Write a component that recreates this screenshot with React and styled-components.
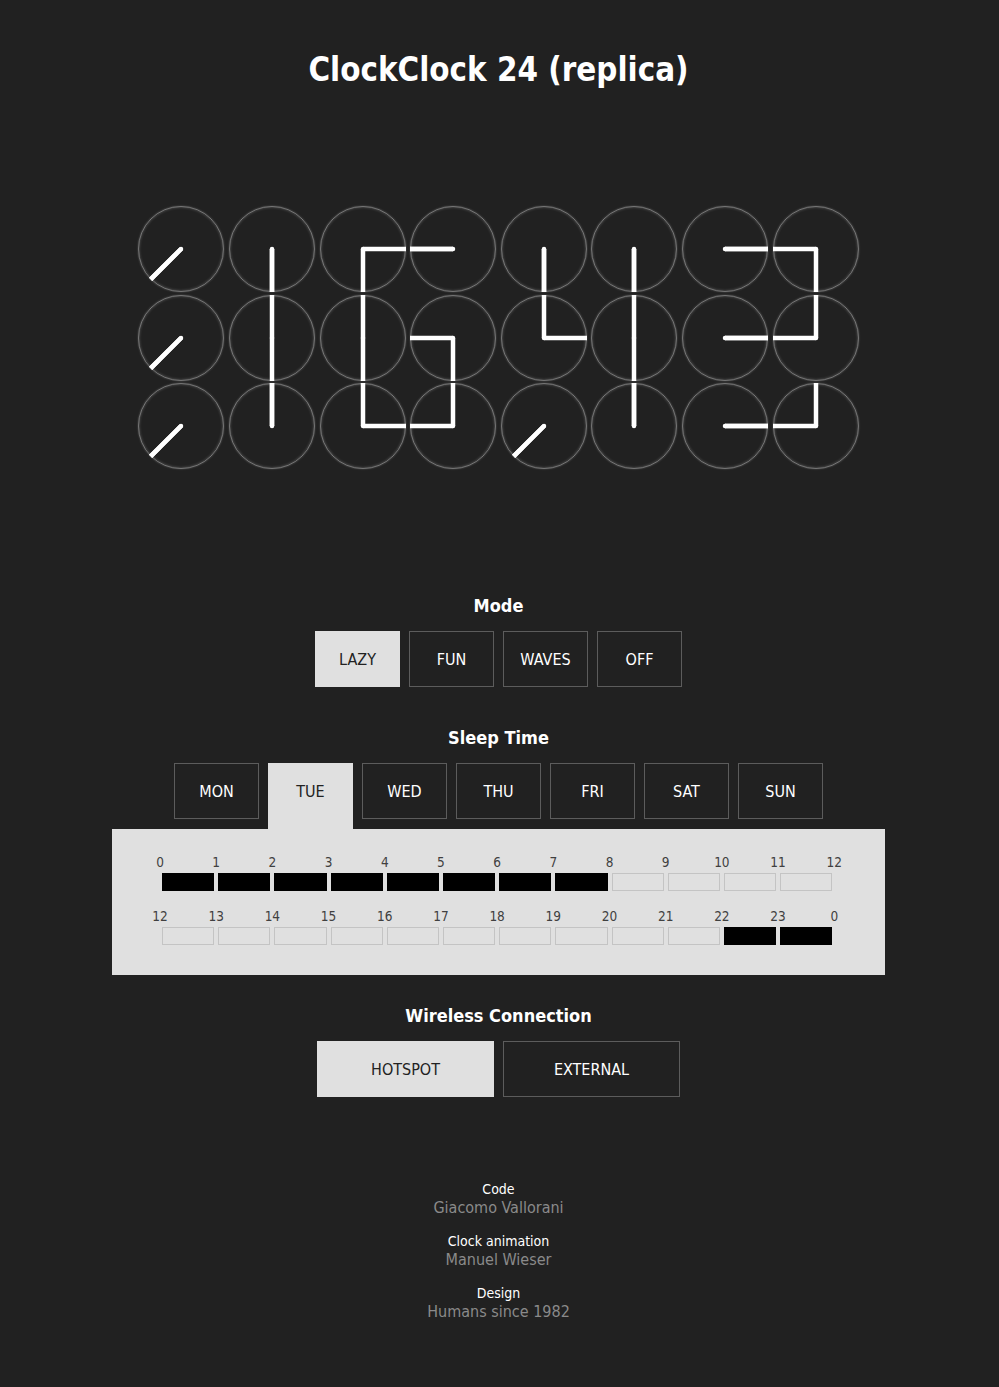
import React, { useState } from "react";
import styled, { createGlobalStyle } from "styled-components";

const GlobalStyle = createGlobalStyle`
  body {
    margin: 0;
    background: #212121;
    color: #fff;
    font-family: "DejaVu Sans Condensed", "DejaVu Sans", "Liberation Sans", sans-serif;
  }
`;

// angles in degrees, clockwise from 12 o'clock
const TIME = [
  [[225, 225], [180, 180], [90, 180], [270, 270], [180, 180], [180, 180], [90, 90], [270, 180]],
  [[225, 225], [0, 180], [0, 180], [270, 180], [0, 90], [0, 180], [90, 90], [0, 270]],
  [[225, 225], [0, 0], [0, 90], [0, 270], [225, 225], [0, 0], [90, 90], [0, 270]],
];

const MODES = ["LAZY", "FUN", "WAVES", "OFF"];
const DAYS = ["MON", "TUE", "WED", "THU", "FRI", "SAT", "SUN"];
const SLEEP = [0, 1, 2, 3, 4, 5, 6, 7, 22, 23];

const Clock = ({ hands }) => (
  <Face>
    <svg viewBox="-42 -42 84 84" width="84" height="84">
      {hands.map((a, i) => (
        <g key={i} transform={`rotate(${a})`}>
          <line x1="0" y1="0" x2="0" y2="-43" stroke="#fff" strokeWidth="4.5" />
        </g>
      ))}
      <circle cx="0" cy="0" r="2.25" fill="#fff" />
    </svg>
  </Face>
);

const HourRow = ({ from }) => {
  const labels = Array.from({ length: 13 }, (_, i) => (from + i) % 24);
  const hours = Array.from({ length: 12 }, (_, i) => from + i);
  return (
    <HourBlock>
      <Labels>
        {labels.map((l, i) => (
          <Label key={i}>{l}</Label>
        ))}
      </Labels>
      <Bars>
        {hours.map((h) => (
          <Cell key={h}>
            <Bar $on={SLEEP.includes(h)} />
          </Cell>
        ))}
      </Bars>
    </HourBlock>
  );
};

const App = () => {
  const [mode, setMode] = useState("LAZY");
  const [day, setDay] = useState("TUE");
  const [net, setNet] = useState("HOTSPOT");

  return (
    <Page>
      <GlobalStyle />
      <Title>ClockClock 24 (replica)</Title>

      <ClockGrid>
        {TIME.map((row, r) => row.map((hands, c) => <Clock key={`${r}-${c}`} hands={hands} />))}
      </ClockGrid>

      <Heading $top={125}>Mode</Heading>
      <Row>
        {MODES.map((m) => (
          <Button key={m} $active={mode === m} onClick={() => setMode(m)}>
            {m}
          </Button>
        ))}
      </Row>

      <Heading $top={39}>Sleep Time</Heading>
      <Tabs>
        {DAYS.map((d) => (
          <Tab key={d} $active={day === d} onClick={() => setDay(d)}>
            {d}
          </Tab>
        ))}
      </Tabs>
      <Panel>
        <HourRow from={0} />
        <HourRow from={12} />
      </Panel>

      <Heading $top={29}>Wireless Connection</Heading>
      <Row>
        {["HOTSPOT", "EXTERNAL"].map((n) => (
          <Button key={n} $wide $active={net === n} onClick={() => setNet(n)}>
            {n}
          </Button>
        ))}
      </Row>

      <Credits>
        <Credit>
          <Role>Code</Role>
          <Name>Giacomo Vallorani</Name>
        </Credit>
        <Credit>
          <Role>Clock animation</Role>
          <Name>Manuel Wieser</Name>
        </Credit>
        <Credit>
          <Role>Design</Role>
          <Name>Humans since 1982</Name>
        </Credit>
      </Credits>
    </Page>
  );
};

export default App;

const Page = styled.main`
  display: flex;
  flex-direction: column;
  align-items: center;
  padding: 50px 2px 60px 0;
`;

const Title = styled.h1`
  margin: 0;
  font-size: 32.8px;
  line-height: 40px;
  font-weight: bold;
`;

const ClockGrid = styled.div`
  margin-top: 116px;
  display: grid;
  grid-template-columns: repeat(8, 86px);
  column-gap: 4.6px;
  row-gap: 2.5px;
`;

const Face = styled.div`
  width: 86px;
  height: 86px;
  box-sizing: border-box;
  border-radius: 50%;
  border: 1.5px solid rgba(255, 255, 255, 0.38);
  box-shadow: 0 0 2px rgba(255, 255, 255, 0.28), inset 0 0 3px rgba(255, 255, 255, 0.28);
  display: flex;
  align-items: center;
  justify-content: center;

  svg {
    display: block;
    overflow: visible;
    flex: none;
  }
`;

const Heading = styled.h2`
  margin: ${(p) => p.$top}px 0 13px;
  font-size: 18px;
  line-height: 24px;
  font-weight: bold;
`;

const Row = styled.div`
  display: flex;
  gap: 9px;
`;

const Button = styled.button`
  width: ${(p) => (p.$wide ? 177 : 85)}px;
  height: 56px;
  box-sizing: border-box;
  border: 1px solid ${(p) => (p.$active ? "#e0e0e0" : "#5c5c5c")};
  background: ${(p) => (p.$active ? "#e0e0e0" : "transparent")};
  color: ${(p) => (p.$active ? "#222" : "#fff")};
  font-family: inherit;
  font-size: 16px;
  padding: 0;
  cursor: pointer;
`;

const Tabs = styled.div`
  display: flex;
  align-items: flex-start;
  gap: 9px;
`;

const Tab = styled(Button)`
  height: ${(p) => (p.$active ? 66 : 56)}px;
  padding-bottom: ${(p) => (p.$active ? 10 : 0)}px;
`;

const Panel = styled.div`
  width: 773px;
  box-sizing: border-box;
  background: #e0e0e0;
  padding: 25px 0 30px 48px;
  display: flex;
  flex-direction: column;
  gap: 17px;
`;

const HourBlock = styled.div`
  width: 674.4px;
`;

const Labels = styled.div`
  display: flex;
  margin-left: -28.1px;
  width: 730.6px;
`;

const Label = styled.span`
  width: 56.2px;
  flex: none;
  text-align: center;
  font-size: 13.5px;
  line-height: 16px;
  color: #404040;
`;

const Bars = styled.div`
  display: flex;
  margin-top: 3px;
`;

const Cell = styled.div`
  width: 56.2px;
  flex: none;
  padding: 0 2px;
  box-sizing: border-box;
`;

const Bar = styled.div`
  height: 18px;
  box-sizing: border-box;
  background: ${(p) => (p.$on ? "#000" : "transparent")};
  border: 1px solid ${(p) => (p.$on ? "#000" : "#c4c4c4")};
`;

const Credits = styled.footer`
  margin-top: 84px;
  display: flex;
  flex-direction: column;
  align-items: center;
  gap: 15px;
`;

const Credit = styled.div`
  display: flex;
  flex-direction: column;
  align-items: center;
  gap: 1px;
`;

const Role = styled.span`
  font-size: 14px;
  line-height: 16px;
  color: #fff;
`;

const Name = styled.span`
  font-size: 16px;
  line-height: 20px;
  color: #8a8a8a;
`;
